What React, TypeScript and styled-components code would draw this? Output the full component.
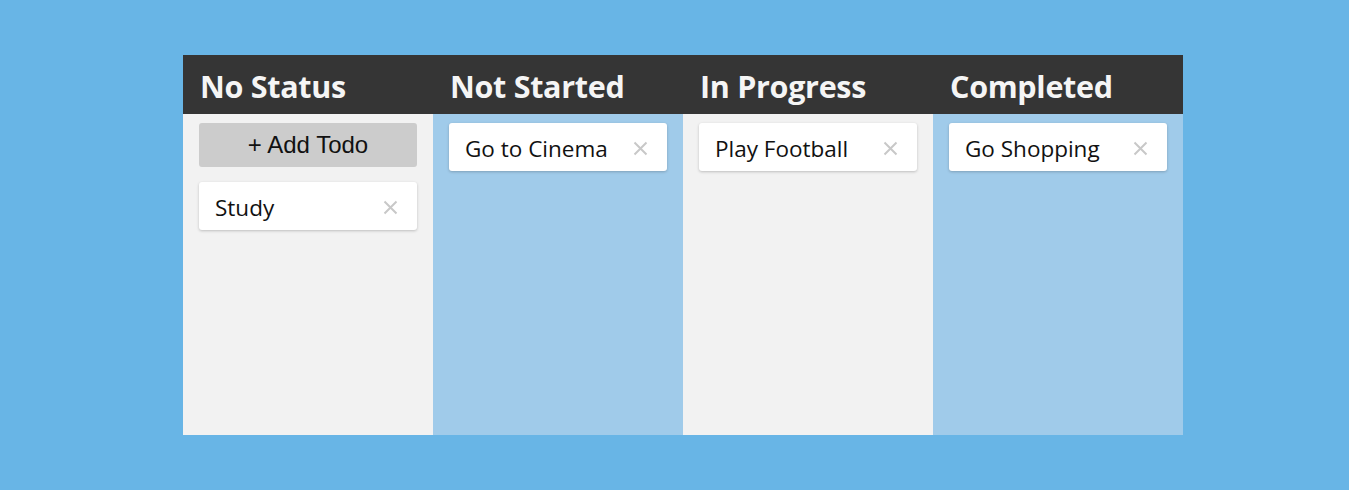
import React from "react";
import styled, { createGlobalStyle } from "styled-components";

const Global = createGlobalStyle`
  html, body { margin: 0; padding: 0; background: #68b5e6; }
  body { font-family: "Open Sans", "Noto Sans", sans-serif; }
  * { box-sizing: border-box; }
`;

const Page = styled.div`
  display: flex;
  justify-content: flex-start;
  padding: 55px 0 0 183px;
  height: 490px;
`;

const Board = styled.div`
  display: grid;
  grid-template-columns: repeat(4, 250px);
  grid-template-rows: 59px 321px;
  width: 1000px;
`;

const Header = styled.div`
  grid-row: 1;
  background: #353535;
  color: #f5f5f5;
  display: flex;
  align-items: center;
  padding: 3px 17px 0;
  font-family: "Open Sans", "Noto Sans", sans-serif;
  font-weight: 700;
  font-size: 30.5px;
  letter-spacing: -0.3px;
`;

const Column = styled.div<{ $alt: boolean }>`
  grid-row: 2;
  background: ${(p) => (p.$alt ? "#a0cbea" : "#f2f2f2")};
  padding: 9px 16px;
  display: flex;
  flex-direction: column;
  gap: 15px;
`;

const AddButton = styled.button`
  height: 44px;
  width: 100%;
  border: none;
  border-radius: 3px;
  background: #cccccc;
  color: #111;
  font-family: "Liberation Sans", Arial, sans-serif;
  font-size: 24px;
  padding: 0 0 1px;
  cursor: pointer;
`;

const Card = styled.div`
  height: 48px;
  background: #ffffff;
  border-radius: 3px;
  box-shadow: 0 1px 3px rgba(0, 0, 0, 0.22);
  display: flex;
  align-items: center;
  justify-content: space-between;
  padding: 0 19px 0 16px;
  font-family: "Open Sans", "Noto Sans", sans-serif;
  font-size: 22.5px;
  color: #111;
`;

const Label = styled.span`
  padding-top: 3px;
`;

const Close = styled.span`
  display: flex;
  align-items: center;
  justify-content: center;
  width: 16px;
  height: 16px;
  margin-top: 2px;
`;

const CloseIcon = () => (
  <svg width="15" height="15" viewBox="0 0 15 15">
    <path d="M1.5 1.5 L13.5 13.5 M13.5 1.5 L1.5 13.5" stroke="#c8c8c8" strokeWidth="2" strokeLinecap="butt" />
  </svg>
);

const columns = [
  { title: "No Status", items: ["Study"], add: true },
  { title: "Not Started", items: ["Go to Cinema"] },
  { title: "In Progress", items: ["Play Football"] },
  { title: "Completed", items: ["Go Shopping"] },
];

export default function App() {
  return (
    <>
      <Global />
      <Page>
        <Board>
          {columns.map((c) => (
            <Header key={c.title}>{c.title}</Header>
          ))}
          {columns.map((c, i) => (
            <Column key={c.title} $alt={i % 2 === 1}>
              {c.add && <AddButton>+ Add Todo</AddButton>}
              {c.items.map((t) => (
                <Card key={t}>
                  <Label>{t}</Label>
                  <Close>
                    <CloseIcon />
                  </Close>
                </Card>
              ))}
            </Column>
          ))}
        </Board>
      </Page>
    </>
  );
}
